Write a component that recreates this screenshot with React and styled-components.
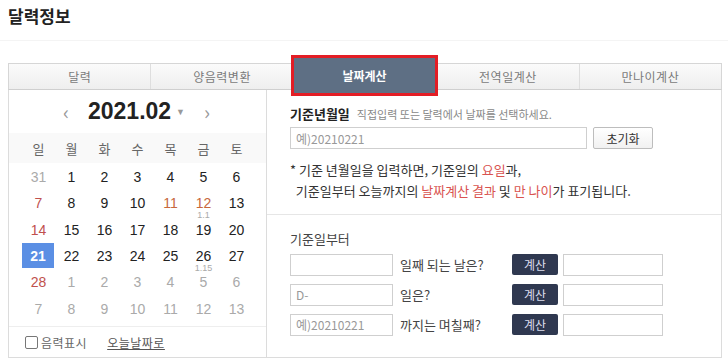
import React from "react";
import styled, { createGlobalStyle } from "styled-components";

const GlobalStyle = createGlobalStyle`
  body {
    margin: 0;
    background: #ffffff;
    font-family: "Noto Sans CJK KR", "Noto Sans", sans-serif;
  }
`;

const Page = styled.div`
  width: 728px;
  height: 364px;
  padding: 0 6px 0 8px;
  box-sizing: border-box;
  overflow: hidden;
`;

const Title = styled.h1`
  margin: 0 -6px 0 -8px;
  padding: 3px 0 0 8px;
  height: 37px;
  font-size: 17px;
  line-height: 26px;
  font-weight: 700;
  color: #222;
  border-bottom: 1px solid #f4f4f4;
`;

const Tabs = styled.div`
  margin-top: 22px;
  display: flex;
  align-items: flex-start;
  height: 27px;
  border: 1px solid #d6d6d6;
  border-bottom-color: #cfcfcf;
  box-sizing: border-box;
  background: linear-gradient(#fbfbfb, #eeeeee);
`;

const Tab = styled.div`
  flex: 1;
  height: 25px;
  display: flex;
  align-items: center;
  justify-content: center;
  font-size: 12px;
  letter-spacing: 0.5px;
  color: #7a7a7a;
  border-left: 1px solid #dedede;
  &:first-child {
    border-left: none;
  }
`;

const ActiveTab = styled(Tab)`
  position: relative;
  z-index: 1;
  height: 41px;
  margin: -9px -2px -7px;
  border: 3px solid #e31d25;
  box-sizing: border-box;
  background: #5e6f84;
  color: #fff;
  font-weight: 700;
  letter-spacing: 0;
`;

const Body = styled.div`
  display: grid;
  grid-template-columns: 257px 1fr;
  height: 268px;
  border: 1px solid #dcdcdc;
  border-top: none;
  box-sizing: border-box;
`;

const Calendar = styled.div`
  display: flex;
  flex-direction: column;
`;

const CalHead = styled.div`
  height: 43px;
  display: flex;
  align-items: center;
  justify-content: center;
  gap: 14px;
  padding-right: 2px;
`;

const Arrow = styled.span`
  font-size: 20px;
  color: #999;
  line-height: 1;
  margin: 0 5px;
`;

const Month = styled.span`
  font-family: "Liberation Sans", Arial, sans-serif;
  font-size: 23px;
  font-weight: 700;
  color: #222;
  display: flex;
  align-items: center;
  gap: 5px;
`;

const Caret = styled.span`
  font-size: 9px;
  color: #999;
  font-weight: 400;
`;

const WeekRow = styled.div`
  display: grid;
  grid-template-columns: repeat(7, 33px);
  padding: 0 12px 0 13px;
  height: 30px;
  align-items: center;
  background: #f9f9f9;
  font-size: 13px;
  color: #666;
  text-align: center;
`;

const Days = styled.div`
  display: grid;
  grid-template-columns: repeat(7, 33px);
  grid-auto-rows: 26.3px;
  padding: 1px 12px 0 13px;
  height: 163px;
  box-sizing: border-box;
`;

const tone = {
  normal: "#222",
  sun: "#c0504d",
  holi: "#c8683c",
  muted: "#aaa",
};

const Day = styled.div`
  position: relative;
  display: flex;
  align-items: center;
  justify-content: center;
  font-family: "Liberation Sans", Arial, sans-serif;
  font-size: 14px;
  line-height: 14px;
  color: ${(p) => (p.$sel ? "#fff" : tone[p.$tone || "normal"])};
  font-weight: ${(p) => (p.$sel ? 700 : 400)};
  background: ${(p) => (p.$sel ? "#5b8fe4" : "transparent")};
  margin: ${(p) => (p.$sel ? "0 1px 1px 0" : "0")};
`;

const Lunar = styled.span`
  position: absolute;
  left: 0;
  right: 0;
  top: 21px;
  text-align: center;
  font-size: 9px;
  color: #aaa;
  line-height: 9px;
`;

const CalFoot = styled.div`
  margin-top: auto;
  height: 31px;
  border-top: 1px solid #eeeeee;
  display: flex;
  align-items: center;
  padding-left: 16px;
  gap: 20px;
  font-size: 12px;
  color: #666;
`;

const Check = styled.label`
  display: flex;
  align-items: center;
  gap: 3px;
  letter-spacing: 0.5px;
`;

const Box = styled.span`
  width: 11px;
  height: 11px;
  border: 1px solid #777;
  border-radius: 2px;
`;

const Link = styled.span`
  text-decoration: underline;
  color: #555;
  letter-spacing: 0.5px;
`;

const Right = styled.div`
  border-left: 1px solid #dcdcdc;
  display: flex;
  flex-direction: column;
`;

const Section = styled.div`
  padding: ${(p) => p.$pad};
  border-bottom: ${(p) => (p.$line ? "1px solid #e6e6e6" : "none")};
  flex: ${(p) => (p.$grow ? 1 : "none")};
  height: ${(p) => p.$h || "auto"};
  box-sizing: border-box;
`;

const LabelRow = styled.div`
  display: flex;
  align-items: baseline;
  gap: 7px;
  height: 20px;
`;

const Strong = styled.span`
  font-size: 13px;
  font-weight: 700;
  color: #222;
`;

const Hint = styled.span`
  font-size: 11px;
  color: #888;
`;

const InputRow = styled.div`
  display: flex;
  gap: 6px;
  margin-top: 3px;
`;

const Field = styled.div`
  width: ${(p) => p.$w}px;
  height: 22px;
  border: 1px solid #cfcfcf;
  box-sizing: border-box;
  display: flex;
  align-items: center;
  padding-left: 5px;
  font-size: 12px;
  color: #999;
  background: #fff;
`;

const Reset = styled.div`
  width: 60px;
  height: 22px;
  border: 1px solid #bdbdbd;
  border-radius: 2px;
  box-sizing: border-box;
  display: flex;
  align-items: center;
  justify-content: center;
  font-size: 12px;
  color: #333;
  background: linear-gradient(#ffffff, #f1f1f1);
`;

const Note = styled.p`
  margin: 10px 0 0;
  font-size: 13px;
  line-height: 21px;
  color: #333;
`;

const Red = styled.span`
  color: #d9534f;
`;

const SubTitle = styled.div`
  font-size: 13px;
  color: #444;
  height: 22px;
  line-height: 22px;
`;

const CalcRow = styled.div`
  display: flex;
  align-items: center;
  height: 21px;
  margin-top: ${(p) => (p.$first ? "4px" : "9px")};
`;

const Question = styled.span`
  width: 119px;
  padding-left: 7px;
  font-size: 13px;
  color: #444;
  box-sizing: border-box;
`;

const CalcBtn = styled.div`
  width: 46px;
  height: 21px;
  background: #2f3850;
  border-radius: 2px;
  color: #dde;
  font-size: 12px;
  display: flex;
  align-items: center;
  justify-content: center;
  margin-right: 5px;
`;

const weekdays = ["일", "월", "화", "수", "목", "금", "토"];

const days = [
  ["31", "muted"], ["1"], ["2"], ["3"], ["4"], ["5"], ["6"],
  ["7", "sun"], ["8"], ["9"], ["10"], ["11", "holi"], ["12", "holi", "1.1"], ["13"],
  ["14", "sun"], ["15"], ["16"], ["17"], ["18"], ["19"], ["20"],
  ["21", "sun", null, true], ["22"], ["23"], ["24"], ["25"], ["26", null, "1.15"], ["27"],
  ["28", "sun"], ["1", "muted"], ["2", "muted"], ["3", "muted"], ["4", "muted"], ["5", "muted"], ["6", "muted"],
  ["7", "muted"], ["8", "muted"], ["9", "muted"], ["10", "muted"], ["11", "muted"], ["12", "muted"], ["13", "muted"],
];

const calcRows = [
  ["", "일째 되는 날은?"],
  ["D-", "일은?"],
  ["예)20210221", "까지는 며칠째?"],
];

export default function App() {
  return (
    <Page>
      <GlobalStyle />
      <Title>달력정보</Title>
      <Tabs>
        <Tab>달력</Tab>
        <Tab>양음력변환</Tab>
        <ActiveTab>날짜계산</ActiveTab>
        <Tab>전역일계산</Tab>
        <Tab>만나이계산</Tab>
      </Tabs>
      <Body>
        <Calendar>
          <CalHead>
            <Arrow>‹</Arrow>
            <Month>
              2021.02<Caret>▼</Caret>
            </Month>
            <Arrow>›</Arrow>
          </CalHead>
          <WeekRow>
            {weekdays.map((w) => (
              <span key={w}>{w}</span>
            ))}
          </WeekRow>
          <Days>
            {days.map(([d, t, lunar, sel], i) => (
              <Day key={i} $tone={t} $sel={sel}>
                {d}
                {lunar && <Lunar>{lunar}</Lunar>}
              </Day>
            ))}
          </Days>
          <CalFoot>
            <Check>
              <Box />
              음력표시
            </Check>
            <Link>오늘날짜로</Link>
          </CalFoot>
        </Calendar>
        <Right>
          <Section $pad="14px 0 0 23px" $h="125px" $line>
            <LabelRow>
              <Strong>기준년월일</Strong>
              <Hint>직접입력 또는 달력에서 날짜를 선택하세요.</Hint>
            </LabelRow>
            <InputRow>
              <Field $w={297}>예)20210221</Field>
              <Reset>초기화</Reset>
            </InputRow>
            <Note>
              * 기준 년월일을 입력하면, 기준일의 <Red>요일</Red>과,
              <br />
              &nbsp;&nbsp;기준일부터 오늘까지의 <Red>날짜계산 결과</Red> 및{" "}
              <Red>만 나이</Red>가 표기됩니다.
            </Note>
          </Section>
          <Section $pad="13px 0 0 23px" $grow>
            <SubTitle>기준일부터</SubTitle>
            {calcRows.map(([v, q], i) => (
              <CalcRow key={i} $first={i === 0}>
                <Field $w={103}>{v}</Field>
                <Question>{q}</Question>
                <CalcBtn>계산</CalcBtn>
                <Field $w={100} />
              </CalcRow>
            ))}
          </Section>
        </Right>
      </Body>
    </Page>
  );
}
